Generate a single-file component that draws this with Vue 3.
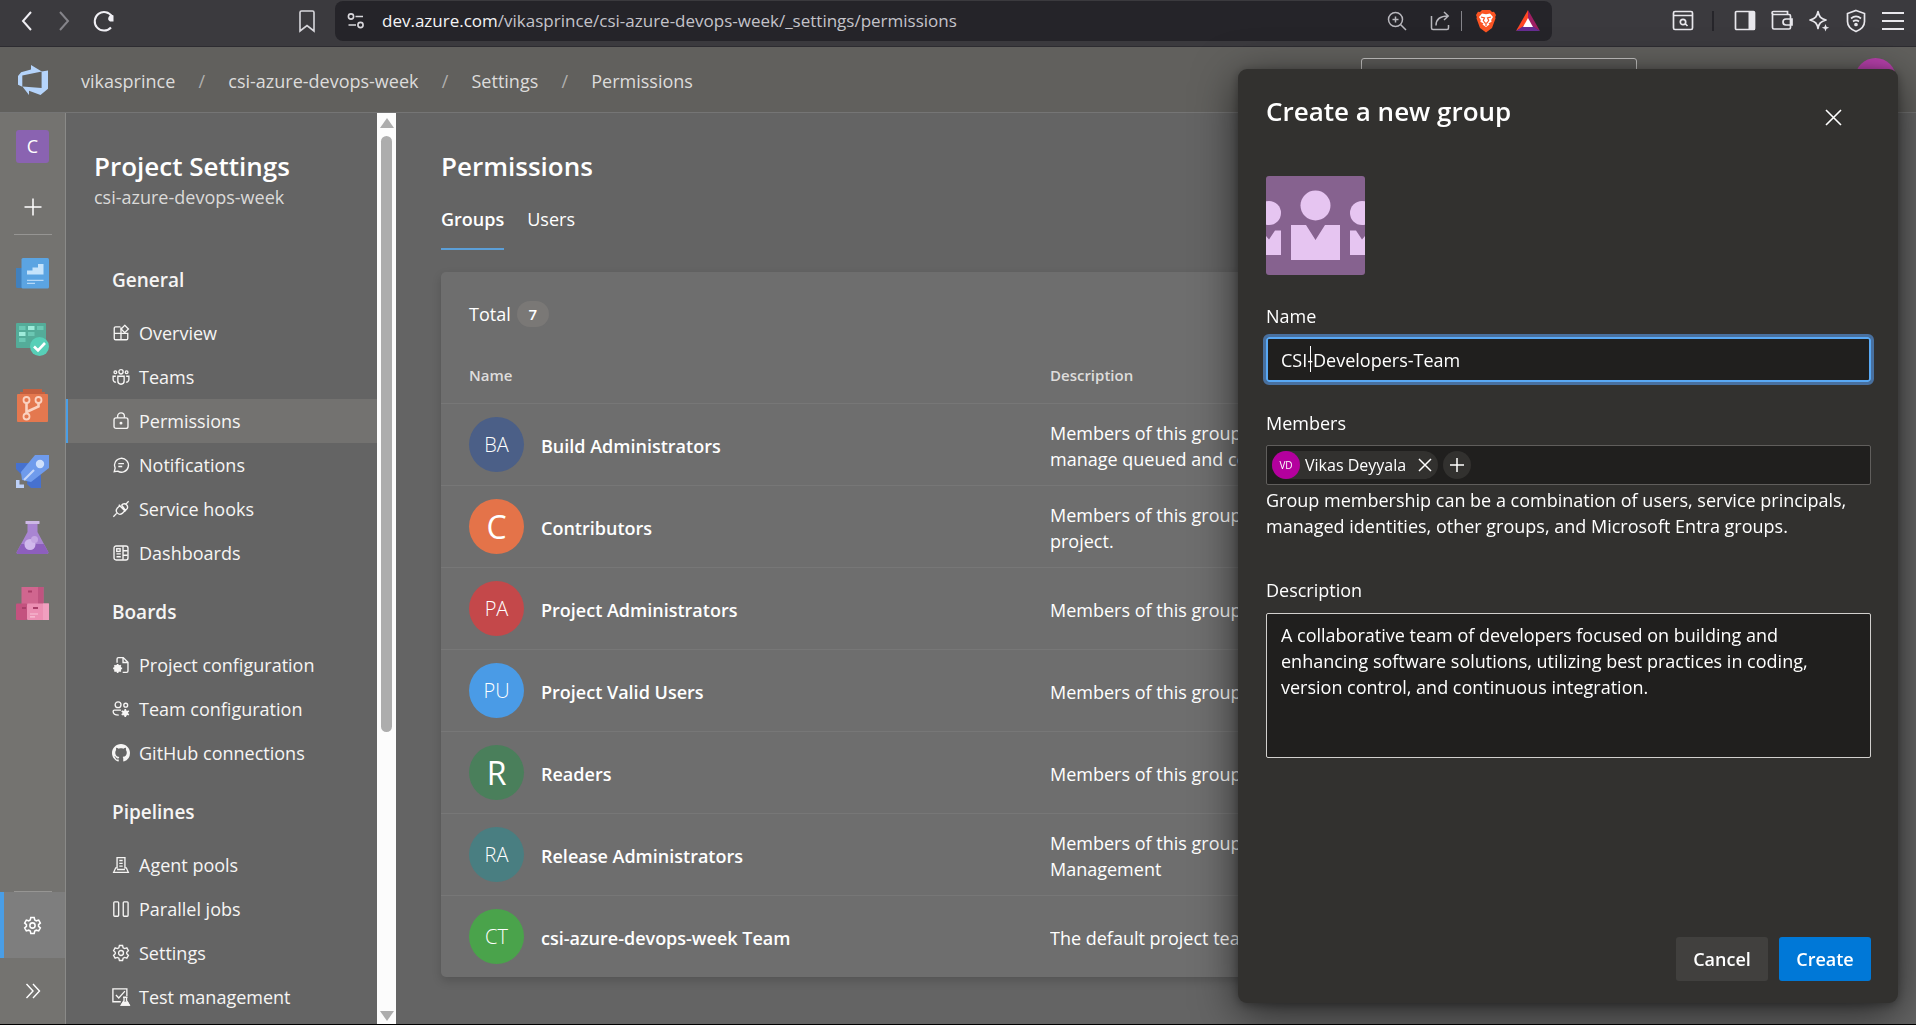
<script setup>
import { ref } from 'vue'

const crumbs = ['vikasprince', 'csi-azure-devops-week', 'Settings', 'Permissions']

const icons = {
  overview: '<path d="M7.5 2.5H3.2a1.2 1.2 0 0 0-1.2 1.2v9.1A1.2 1.2 0 0 0 3.2 14h9.6a1.2 1.2 0 0 0 1.2-1.2V8.3H2M8 3v11"/><path d="M11.3 1.2l3.3 3.2-3.3 3.3L8.1 4.4z"/>',
  teams: '<circle cx="8" cy="3.4" r="1.9"/><circle cx="3" cy="3.8" r="1.2"/><circle cx="13" cy="3.8" r="1.2"/><path d="M5.2 7.3h5.6v4.3a2.8 2.8 0 0 1-5.6 0zM3.4 7.3H1v2.9a2.4 2.4 0 0 0 2.6 2.4M12.6 7.3H15v2.9a2.4 2.4 0 0 1-2.6 2.4"/>',
  lock: '<rect x="1.8" y="5.2" width="12.4" height="9.4" rx="1.8"/><path d="M5 5V3.8a3 3 0 0 1 6 0V5"/><circle cx="8" cy="9.9" r=".7" fill="currentColor"/>',
  chat: '<path d="M2 14l.8-3.2A6.2 6.2 0 1 1 5.2 13.500z"/><path d="M5.600 6.800h5M5.600 9.300h3.500"/>',
  plug: '<path d="M1.200 14.800l2.900-2.900M11.900 4.100l2.900-2.900M7 5l-2.400 2.400a3.200 3.200 0 0 0 4.500 4.500L11.400 9.600zM6 4.200l6 6M8.600 4.600l1-1a3 3 0 0 1 4 3.900l-1.600 1.700z"/>',
  dash: '<rect x="1.800" y="1.800" width="12.400" height="12.400" rx="1.800"/><path d="M9.800 2v12M10 6h4M10 10h4M4 8.800h3.800M4 11.300h3.800"/><rect x="4.200" y="4.200" width="3" height="2.400"/>',
  project: '<path d="M4.500 6V2.600a1.200 1.200 0 0 1 1.200-1.200H10L14.200 5.600v7.700a1.200 1.200 0 0 1-1.200 1.200H9.500M9.800 1.600v4.200H14"/><circle cx="5" cy="11" r="2.200" stroke-width="2"/><path d="M5 7v8M1 11h8M2.200 8.200l5.600 5.600M7.800 8.200l-5.600 5.600" stroke-width="1.500"/>',
  teamconf: '<circle cx="5.400" cy="4.200" r="2.600"/><circle cx="12.200" cy="4.600" r="1.700"/><path d="M8 9H2.200A1.200 1.200 0 0 0 1 10.200C1 12.400 3 13.400 6 13.400"/><circle cx="11.800" cy="11.500" r="1.500" stroke-width="2"/><path d="M11.800 8v7M8.600 9.800l6.400 3.400M15 9.800l-6.400 3.400" stroke-width="1.500"/>',
  github: '<path stroke="none" fill="currentColor" d="M8 0C3.580 0 0 3.580 0 8c0 3.540 2.290 6.530 5.470 7.590.4.070.55-.17.55-.38 0-.19-.01-.82-.01-1.490-2.010.37-2.530-.49-2.690-.94-.09-.23-.48-.94-.82-1.130-.28-.15-.68-.52-.01-.53.63-.01 1.080.58 1.230.82.72 1.210 1.870.87 2.330.66.070-.52.28-.87.51-1.070-1.780-.2-3.640-.89-3.640-3.950 0-.87.31-1.590.82-2.150-.08-.2-.36-1.020.08-2.120 0 0 .67-.21 2.200.82.64-.18 1.320-.27 2-.27s1.360.09 2 .27c1.530-1.040 2.200-.82 2.200-.82.44 1.100.16 1.920.08 2.120.51.56.82 1.270.82 2.150 0 3.070-1.870 3.750-3.650 3.950.29.25.54.73.54 1.480 0 1.070-.01 1.930-.01 2.200 0 .21.15.46.55.38A8.010 8.010 0 0 0 16 8c0-4.420-3.580-8-8-8z"/>',
  agent: '<path d="M4.500 11V1.500h7V11M6.500 4h3M6.500 6.500h3M6.500 9h3M4.500 10.500H3.300L1.500 14.500h13l-1.800-4h-1.200M4.500 12h7"/>',
  parallel: '<rect x="1.600" y="1.600" width="4.300" height="12.800" rx=".8"/><rect x="10" y="1.600" width="4.300" height="12.800" rx=".8"/>',
  gear: '<path d="M6.600 1.300h2.800l.5 2 1.300.75 2-.6 1.400 2.450-1.500 1.400v1.400l1.500 1.400-1.400 2.450-2-.6-1.300.75-.5 2H6.600l-.5-2-1.300-.75-2 .6L1.400 10.100l1.500-1.400V7.300L1.400 5.900l1.400-2.450 2 .6 1.300-.75z"/><circle cx="8" cy="8" r="2.200"/>',
  test: '<path d="M13.200 7V.8H.8v11.400h7M3.500 6.200L6 8.800l5.500-6M9.800 8.200h4M10.700 8.500v2.700L8.300 15.200h7l-2.400-4V8.500"/><path fill="currentColor" d="M10 12.500h3.800l1.400 2.600H8.400z"/>',
}

const sections = [
  { title: 'General', items: [
    ['overview', 'Overview'], ['teams', 'Teams'], ['lock', 'Permissions'],
    ['chat', 'Notifications'], ['plug', 'Service hooks'], ['dash', 'Dashboards'],
  ] },
  { title: 'Boards', items: [
    ['project', 'Project configuration'], ['teamconf', 'Team configuration'], ['github', 'GitHub connections'],
  ] },
  { title: 'Pipelines', items: [
    ['agent', 'Agent pools'], ['parallel', 'Parallel jobs'], ['gear', 'Settings'], ['test', 'Test management'],
  ] },
]

const groups = [
  { initials: 'BA', color: '#4b5f87', name: 'Build Administrators', text: 'Members of this group can create, modify and delete build definitions and\nmanage queued and completed builds.' },
  { initials: 'C', color: '#e47349', name: 'Contributors', text: 'Members of this group can add, modify, and delete items within the team\nproject.' },
  { initials: 'PA', color: '#c4484a', name: 'Project Administrators', text: 'Members of this group can perform all operations in the team project.' },
  { initials: 'PU', color: '#4a9be6', name: 'Project Valid Users', text: 'Members of this group have access to the team project.' },
  { initials: 'R', color: '#4a7f5b', name: 'Readers', text: 'Members of this group have access to the team project.' },
  { initials: 'RA', color: '#497e81', name: 'Release Administrators', text: 'Members of this group can perform all operations on Release\nManagement' },
  { initials: 'CT', color: '#4aa34b', name: 'csi-azure-devops-week Team', text: 'The default project team.' },
]

const name = ref('CSI-Developers-Team')
const description = ref('A collaborative team of developers focused on building and enhancing software solutions, utilizing best practices in coding, version control, and continuous integration.')
</script>

<template>
  <div class="page">
    <div class="browser">
      <div class="nav-buttons">
        <button class="plain" aria-label="Back"><svg width="18" height="26" viewBox="0 0 18 26"><path d="M13 4L5 13l8 9" fill="none" stroke="#f0eff4" stroke-width="2"/></svg></button>
        <button class="plain" aria-label="Forward"><svg width="18" height="26" viewBox="0 0 18 26"><path d="M5 4l8 9-8 9" fill="none" stroke="#85848a" stroke-width="2"/></svg></button>
        <button class="plain" aria-label="Reload"><svg width="24" height="24" viewBox="0 0 24 24"><path d="M20 7.500A9.300 9.300 0 1 0 19 18.500" fill="none" stroke="#f0eff4" stroke-width="2"/><path d="M21.500 6.500v6h-3.500a3.300 3.300 0 0 1 3.500-6z" fill="#f0eff4"/></svg></button>
      </div>
      <button class="plain bookmark" aria-label="Bookmark"><svg width="18" height="24" viewBox="0 0 18 24"><path d="M2 3.500A1.500 1.500 0 0 1 3.500 2h11A1.500 1.500 0 0 1 16 3.500V22l-7-5.500L2 22z" fill="none" stroke="#d8d7dc" stroke-width="1.600"/></svg></button>
      <div class="address">
        <svg width="18" height="18" viewBox="0 0 18 18" fill="none" stroke="#d8d7dc" stroke-width="1.600"><circle cx="4" cy="4.500" r="2.600"/><path d="M8.500 4.500H16M1.500 13H9"/><circle cx="13.500" cy="13" r="2.600"/></svg>
        <span class="url"><b>dev.azure.com</b>/vikasprince/csi-azure-devops-week/_settings/permissions</span>
        <div class="address-icons">
          <svg width="20" height="20" viewBox="0 0 20 20" fill="none" stroke="#b8b7bd" stroke-width="1.500"><circle cx="8.500" cy="8.500" r="7"/><path d="M13.500 13.500L19 19M8.500 5.500v6M5.500 8.500h6"/></svg>
          <svg class="share" width="20" height="20" viewBox="0 0 20 20" fill="none" stroke="#b8b7bd" stroke-width="1.500"><path d="M1.500 5v12A1.500 1.500 0 0 0 3 18.500h14a1.500 1.500 0 0 0 1.500-1.500v-3M6 14.500C6 8 10 5 18 5M14 1l4.200 4L14 9"/></svg>
          <i class="bar"></i>
          <svg class="lion" width="20" height="24" viewBox="0 0 20 24"><path d="M6 1h8l2 2 2-.3L20 6l-.8 2 .3 1.500L16 19l-6 4.500L4 19 .5 9.500.8 8 0 6l2-3.300 2 .3z" fill="#fb5423"/><path d="M6 4.500l4 .8 4-.8 3 3.500-1.800 3 .4 1.800-3.100 1.700 1 1-3.500 2.500-3.500-2.500 1-1-3.100-1.700.4-1.800L3 8z" fill="#fff"/><path d="M5 8l3.500 1-1.200 2.500L9 14h2l1.700-2.500L11.500 9 15 8M10 14v3" fill="none" stroke="#fb5423" stroke-width="1.200"/></svg>
          <svg class="bat" width="24" height="22" viewBox="0 0 24 22"><path d="M12 0L0 21l12-7z" fill="#ff4724"/><path d="M12 0l12 21-12-7z" fill="#9e1f63"/><path d="M0 21h24l-12-8z" fill="#662d91"/><path d="M12 8l5 9H7z" fill="#fff"/></svg>
        </div>
      </div>
      <div class="tools">
        <svg width="22" height="22" viewBox="0 0 22 22" fill="none" stroke="#e8e7ec" stroke-width="1.700"><rect x="1.500" y="1.500" width="19" height="18" rx="1.500"/><path d="M1.500 5.500h19M13 13.500l2.500 2.500"/><circle cx="11" cy="12" r="2.700"/></svg>
        <i class="tool-bar"></i>
        <svg width="22" height="22" viewBox="0 0 22 22"><rect x="1.500" y="1.500" width="19" height="18" rx="1" fill="none" stroke="#e8e7ec" stroke-width="1.700"/><path d="M14.500 2H21v18h-6.500z" fill="#e8e7ec"/></svg>
        <svg width="22" height="22" viewBox="0 0 22 22" fill="none" stroke="#e8e7ec" stroke-width="1.700"><path d="M1.500 3v14.500A1.500 1.500 0 0 0 3 19h15a1.500 1.500 0 0 0 1.500-1.500V6A1.500 1.500 0 0 0 18 4.500H2.500A1.500 1.500 0 0 1 2.500 1.500H16.500V4.500M21 9h-6a3 3 0 0 0-3 3 3 3 0 0 0 3 3h6z"/></svg>
        <svg width="22" height="22" viewBox="0 0 22 22"><path d="M10 1.500c1 5 2.500 7 8 8.500-5.500 1.500-7 3.500-8 8.500-1-5-2.500-7-8-8.500 5.500-1.500 7-3.500 8-8.500z" fill="none" stroke="#e8e7ec" stroke-width="1.700" stroke-linejoin="round"/><path d="M17.500 14l1 2.700 2.700 1-2.700 1-1 2.700-1-2.700-2.700-1 2.700-1z" fill="#e8e7ec"/></svg>
        <svg width="22" height="24" viewBox="0 0 22 24" fill="none" stroke="#e8e7ec" stroke-width="1.700"><path d="M11 1.500l8.500 3v8c0 5-3.500 8-8.500 10-5-2-8.500-5-8.500-10v-8zM6 9.500c3-2.500 7-2.500 10 0M8 12.500c2-1.500 4-1.500 6 0"/><circle cx="11" cy="15.500" r="1" fill="#e8e7ec"/></svg>
        <svg width="22" height="22" viewBox="0 0 22 22" stroke="#e8e7ec" stroke-width="2"><path d="M0 3h22M0 11h22M0 19h22"/></svg>
      </div>
    </div>

    <header class="topbar">
      <a href="#" class="logo" aria-label="Azure DevOps"><svg width="32" height="32" viewBox="0 0 32 32"><path fill="#b5d4fb" d="M31 6.500v18.300L23.500 31 12 26.800v4.100L5.400 22.400l19.200 1.500V7.500zM24.800 7.600L14 1.100v4.300L4.100 8.300 1 12.100v8.700l4.300 1.900V11.500z"/></svg></a>
      <nav class="crumbs">
        <template v-for="(c, i) in crumbs" :key="c">
          <span v-if="i" class="slash">/</span><a href="#">{{ c }}</a>
        </template>
      </nav>
      <input class="search" type="search" aria-label="Search" />
      <span class="me"></span>
    </header>

    <div class="body">
      <nav class="rail">
        <a href="#" class="slot"><span class="tile">C</span></a>
        <a href="#" class="slot short" aria-label="New"><svg width="18" height="18" viewBox="0 0 18 18"><path d="M9 .5v17M.5 9h17" stroke="#fff" stroke-width="1.500"/></svg></a>
        <i class="rule"></i>
        <a href="#" class="slot first" aria-label="Overview"><svg width="33" height="33" viewBox="0 0 33 33"><path d="M0 11h10v20H1.500A1.500 1.500 0 0 1 0 29.500z" fill="#4180bd"/><rect x="5.500" y="1" width="27.500" height="30.500" rx="1.500" fill="#5ba4e2"/><path d="M11 17.500v-4h5.500v-3H22V7h5.500v10.500z" fill="#c5e3fb"/><path d="M11 23.300h16.500M11 26.300h8" stroke="#b5d8f7" stroke-width="1.200"/></svg></a>
        <a href="#" class="slot" aria-label="Boards"><svg width="33" height="33" viewBox="0 0 33 33"><rect width="30" height="25" rx="1" fill="#54ac99"/><path d="M3 3h6.500v4H3zM21 3h6.500v4H21zM12 9h6.500v4H12zM3 15h6.500v4H3z" fill="#6bc7b3"/><path d="M12 3h6.500v4H12zM3 9h6.500v4H3z" fill="#9eebda"/><circle cx="23.500" cy="23.500" r="9.500" fill="#57cfb7"/><path d="M18 23.500l4 4 7-7.500" fill="none" stroke="#fff" stroke-width="2.600"/></svg></a>
        <a href="#" class="slot" aria-label="Repos"><svg width="33" height="33" viewBox="0 0 33 33"><path d="M7 0h19v3h3v3H4V3h3z" fill="#c4603f"/><rect x="1" y="5" width="31" height="28" rx="1" fill="#e4784f"/><g fill="none" stroke="#fbd2c0" stroke-width="1.800"><circle cx="10.500" cy="11" r="3"/><circle cx="22.500" cy="11" r="3"/><circle cx="10.500" cy="27.500" r="3"/></g><path d="M10.500 14v10.500M22.500 14v3.500l-12 5.500" fill="none" stroke="#fbd2c0" stroke-width="2.600"/></svg></a>
        <a href="#" class="slot" aria-label="Pipelines"><svg width="33" height="33" viewBox="0 0 33 33"><path d="M0 8h13v12H6L0 14z" fill="#4671cf"/><path d="M12 20h13v13H15l-4-4z" fill="#4671cf"/><path d="M19 0h14v13L15 27l-9-2-1-8z" fill="#6f9bec"/><circle cx="24" cy="9" r="4.200" fill="#cfe0fc"/><path d="M8 25l10-10" stroke="#c4d6fa" stroke-width="2.200"/><path d="M0 25h3.500v4.500H8V33H0z" fill="#bcd0f8"/></svg></a>
        <a href="#" class="slot" aria-label="Test Plans"><svg width="33" height="33" viewBox="0 0 33 33"><path d="M11.500 2h10v9L32 30.500a1.500 1.500 0 0 1-1.300 2.500H2.300A1.500 1.500 0 0 1 1 30.500L11.500 11z" fill="#a985d2"/><path d="M5.200 23h22.600L32 30.500a1.500 1.500 0 0 1-1.300 2.500H2.300A1.500 1.500 0 0 1 1 30.500z" fill="#8d5fbd"/><rect x="9.500" width="14" height="3" rx=".5" fill="#cdb8e6"/><circle cx="14" cy="23.500" r="5.500" fill="#d0b8ec"/><circle cx="18.500" cy="18.500" r="3.500" fill="#c4a7e3"/></svg></a>
        <a href="#" class="slot" aria-label="Artifacts"><svg width="33" height="33" viewBox="0 0 33 33"><rect x="5.500" width="22" height="17" fill="#d0668f"/><path d="M22 0h5.500v17H22z" fill="#bf5480"/><rect y="16.500" width="11" height="16.500" rx="1" fill="#c4527f"/><rect x="11" y="16.500" width="22" height="16.500" rx="1" fill="#ec8fb3"/><path d="M27 16.500h6V33h-6z" fill="#f09fbf"/><path d="M12 4.500h4M6 21h4M17 21h5" stroke="#a93e69" stroke-width="2"/><path d="M14 27h8M14 29.800h5" stroke="#f7c4d7" stroke-width="1.200"/></svg></a>
        <i class="rule bottom"></i>
        <a href="#" class="slot active" aria-label="Project settings"><svg width="19" height="19" viewBox="0 0 16 16" fill="none" stroke="#fff" stroke-width="1.300" v-html="icons.gear"></svg></a>
        <a href="#" class="slot" aria-label="Expand"><svg width="16" height="16" viewBox="0 0 16 16" fill="none" stroke="#fff" stroke-width="1.400"><path d="M1.500 1L8 8l-6.500 7M8 1l6.500 7L8 15"/></svg></a>
      </nav>

      <aside class="settings">
        <h2>Project Settings</h2>
        <p class="sub">csi-azure-devops-week</p>
        <section v-for="s in sections" :key="s.title">
          <h3>{{ s.title }}</h3>
          <a v-for="[icon, label] in s.items" :key="label" href="#" :class="{ current: label === 'Permissions' }">
            <svg height="18" viewBox="0 0 16 16" fill="none" stroke="currentColor" stroke-width="1.200" v-html="icons[icon]"></svg>
            <span>{{ label }}</span>
          </a>
        </section>
      </aside>
      <div class="scrollbar">
        <i class="up"></i><i class="thumb"></i><i class="down"></i>
      </div>

      <main class="content">
        <h1>Permissions</h1>
        <div class="tabs"><button class="on">Groups</button><button>Users</button></div>
        <div class="card">
          <div class="total">Total <span>7</span></div>
          <table>
            <thead><tr><th class="c-name">Name</th><th>Description</th></tr></thead>
            <tbody>
              <tr v-for="g in groups" :key="g.name">
                <td><div class="who"><span class="avatar" :class="{ single: g.initials.length === 1 }" :style="{ background: g.color }">{{ g.initials }}</span><span class="g-name">{{ g.name }}</span></div></td>
                <td class="desc">{{ g.text }}</td>
              </tr>
            </tbody>
          </table>
        </div>
      </main>
    </div>

    <form class="panel" role="dialog" aria-label="Create a new group" @submit.prevent>
      <div class="panel-head">
        <h2>Create a new group</h2>
        <button type="button" class="plain" aria-label="Close"><svg width="17" height="17" viewBox="0 0 17 17"><path d="M1 1l15 15M16 1L1 16" stroke="#fff" stroke-width="1.600"/></svg></button>
      </div>
      <svg class="group-pic" width="99" height="99" viewBox="0 0 99 99"><rect width="99" height="99" rx="3" fill="#86628f"/><g fill="#e6c5f1"><circle cx="49.500" cy="29.500" r="15"/><path d="M25 49h15l9.500 15L59 49h15v35H25z"/><circle cx="3" cy="37" r="12"/><path d="M0 60l3 3.500 6-9h6V79H0z"/><circle cx="96" cy="37" r="12"/><path d="M99 60l-3 3.500-6-9h-6V79h15z"/></g></svg>
      <label for="g-name">Name</label>
      <div class="name-box"><input id="g-name" v-model="name" type="text" /><i class="caret"></i></div>
      <label for="g-members">Members</label>
      <div class="members">
        <span class="chip"><span class="vd">VD</span>Vikas Deyyala<button type="button" class="plain" aria-label="Remove"><svg width="14" height="14" viewBox="0 0 14 14"><path d="M1 1l12 12M13 1L1 13" stroke="#fff" stroke-width="1.500"/></svg></button></span>
        <button type="button" class="plain add" aria-label="Add member"><svg width="14" height="14" viewBox="0 0 14 14"><path d="M7 0v14M0 7h14" stroke="#fff" stroke-width="1.500"/></svg></button>
        <input id="g-members" type="text" />
      </div>
      <p class="help">Group membership can be a combination of users, service principals, managed identities, other groups, and Microsoft Entra groups.</p>
      <label for="g-desc">Description</label>
      <textarea id="g-desc" v-model="description"></textarea>
      <div class="actions"><button type="button">Cancel</button><button type="submit" class="primary">Create</button></div>
    </form>
  </div>
</template>

<style>
body { background: #646464; overflow: hidden; }
</style>

<style scoped>
* { box-sizing: border-box; }
.page {
  height: 100vh;
  display: flex;
  flex-direction: column;
  border-bottom: 1px solid #000;
  background: #646464;
  color: #fff;
  font: 18px/26px "Open Sans", "Noto Sans", sans-serif;
}
a { color: inherit; text-decoration: none; }
h1, h2, h3, p { margin: 0; }
button, input, textarea { font: inherit; color: inherit; }
svg { display: block; flex: none; }
i { display: block; }
.plain { display: flex; padding: 0; border: 0; background: none; }

.browser {
  flex: none;
  display: flex;
  height: 47px;
  padding-bottom: 4px;
  align-items: center;
  background: #3b3a3e;
  border-bottom: 1px solid #2d2c31;
}
.nav-buttons { display: flex; gap: 19px; align-items: center; width: 298px; padding-left: 18px; }
.bookmark { width: 37px; }
.address {
  flex: 1;
  display: flex;
  align-items: center;
  height: 40px;
  padding: 0 12px;
  border-radius: 8px;
  background: #252429;
}
.url { flex: 1; margin-left: 17px; font-size: 17px; color: #c4c3c9; }
.url b { font-weight: 400; color: #f4f4f6; }
.address-icons { display: flex; align-items: center; }
.share { margin-left: 23px; }
.bar { width: 1px; height: 20px; margin-left: 11px; background: #85848a; }
.lion { margin-left: 14px; }
.bat { margin-left: 20px; }
.tools { display: flex; align-items: center; gap: 15px; padding: 0 12px 0 120px; }
.tool-bar { width: 2px; height: 20px; margin: 0 5px 0 3px; background: #26252a; }

.topbar {
  flex: none;
  display: flex;
  height: 66px;
  padding-right: 20px;
  align-items: center;
  background: #61605d;
  border-bottom: 1px solid #757575;
  color: #dddcdb;
}
.logo { width: 81px; padding-left: 17px; }
.crumbs { display: flex; flex: 1; padding-top: 3px; }
.slash { width: 53px; text-align: center; color: #b0afae; }
.search { align-self: flex-start; width: 276px; height: 44px; margin: 11px 218px 0 0; border: 1px solid #c4c3c2; border-radius: 3px; background: #5c5b59; }
.me { align-self: flex-start; flex: none; width: 41px; height: 41px; margin-top: 11px; border-radius: 50%; background: #b941ad; }

.body { flex: 1; min-height: 0; display: flex; overflow: hidden; }
.rail {
  flex: none;
  display: flex;
  flex-direction: column;
  align-items: center;
  width: 66px;
  background: #747370;
  border-right: 1px solid #8a8a88;
}
.slot { flex: none; display: flex; align-items: center; justify-content: center; width: 65px; height: 66px; }
.slot.short { height: 55px; }
.slot.first { margin-top: 5px; }
.tile { width: 33px; height: 33px; border-radius: 3px; background: #8a63b1; text-align: center; line-height: 33px; }
.rule { flex: none; width: 38px; height: 1px; background: #969593; }
.rule.bottom { margin-top: auto; }
.active { background: #7e7e7e; border-left: 4px solid #4a9ee6; padding-right: 4px; }

.settings { flex: none; width: 311px; padding-top: 36px; overflow: hidden; color: #f6f5f4; }
.settings h2 { padding-left: 28px; font-size: 26px; line-height: 35px; font-weight: 600; color: #fff; }
.sub { height: 65px; padding-left: 28px; color: #dbdad9; }
.settings section { margin-bottom: 6px; }
.settings h3 { padding-left: 46px; font-size: 19px; line-height: 62px; font-weight: 600; }
.settings a { display: flex; align-items: center; height: 44px; padding-left: 43px; border-left: 2px solid transparent; }
.settings a svg { width: 20px; margin-right: 8px; }
.settings a.current { background: #737270; border-color: #4a9ee6; }

.scrollbar { flex: none; display: flex; flex-direction: column; align-items: center; width: 19px; padding: 5px 0 3px; background: #fcfcfc; }
.up, .down { border: 7px solid transparent; border-top-width: 0; border-bottom: 10px solid #adadad; }
.down { border-bottom-width: 0; border-top: 10px solid #adadad; }
.thumb { width: 11px; height: 66%; margin: 8px 0 auto; border-radius: 6px; background: #adadad; }

.content { flex: 1; min-width: 0; padding: 35px 28px 0 45px; }
h1 { font-size: 26px; line-height: 36px; font-weight: 600; }
.tabs { display: flex; gap: 23px; height: 66px; margin-bottom: 22px; }
.tabs button { height: 66px; padding: 5px 0 0; border: 0; border-bottom: 2px solid transparent; background: none; }
.tabs .on { font-weight: 600; border-color: #5b9fd8; }
.card { background: #6e6e6e; border-radius: 5px; box-shadow: 0 4px 10px rgba(0, 0, 0, 0.16); }
.total { display: flex; align-items: center; gap: 6px; height: 84px; padding-left: 28px; }
.total span { width: 32px; border-radius: 13px; background: #7a7876; text-align: center; font-size: 15px; font-weight: 600; }
table { width: 100%; border-collapse: collapse; table-layout: fixed; }
th { height: 47px; padding: 0; text-align: left; vertical-align: top; line-height: 38px; font-size: 15px; font-weight: 600; color: #dedddc; }
.c-name { width: 609px; padding-left: 28px; }
td { height: 82px; padding: 0; border-top: 1px solid #777; }
.who { display: flex; align-items: center; gap: 17px; padding-left: 28px; font-weight: 600; }
.g-name { padding-top: 3px; }
.avatar { width: 55px; height: 55px; border-radius: 50%; text-align: center; line-height: 55px; font-size: 20px; font-weight: 300; }
.avatar.single { font-size: 32px; font-weight: 400; }
.desc { padding-top: 3px; white-space: pre; overflow: hidden; }

.panel {
  position: fixed;
  top: 69px;
  right: 18px;
  bottom: 22px;
  display: flex;
  flex-direction: column;
  width: 660px;
  padding: 23px 27px 22px 28px;
  border-radius: 9px;
  background: #32312f;
  box-shadow: 0 10px 44px rgba(0, 0, 0, 0.62), 0 2px 10px rgba(0, 0, 0, 0.3);
}
.panel-head { display: flex; justify-content: space-between; height: 84px; padding-right: 29px; }
.panel-head h2 { font-size: 26px; line-height: 38px; font-weight: 600; }
.panel-head button { margin-top: 17px; height: 17px; }
.panel label { margin-top: 28px; }
.name-box { position: relative; height: 45px; margin-top: 8px; }
.name-box input {
  width: 100%;
  height: 45px;
  padding: 0 13px;
  border: 2px solid #59a9f5;
  border-radius: 3px;
  outline: 3px solid #4870a0;
  background: #201f1e;
}
.caret { position: absolute; left: 44px; top: 9px; width: 1px; height: 26px; background: #fff; }
.members { display: flex; align-items: center; height: 40px; margin-top: 9px; padding: 0 5px; border: 1px solid #605e5c; border-radius: 2px; background: #201f1e; }
.chip { display: flex; align-items: center; height: 28px; padding-right: 6px; border-radius: 14px; background: #32312f; font-size: 16px; }
.chip button { margin-left: 12px; }
.vd { width: 28px; height: 28px; margin-right: 5px; border-radius: 50%; background: #b4009e; text-align: center; line-height: 28px; font-size: 10px; }
.add { align-items: center; justify-content: center; width: 28px; height: 28px; margin-left: 5px; border-radius: 50%; background: #32312f; }
.members input { flex: 1; min-width: 0; border: 0; outline: 0; background: none; }
.help { margin-top: 2px; }
.panel .help + label { margin-top: 38px; }
textarea { flex: none; width: 100%; height: 145px; margin-top: 10px; padding: 8px 14px; border: 1px solid #d2d0ce; border-radius: 2px; outline: 0; resize: none; background: #201f1e; }
.actions { display: flex; justify-content: flex-end; gap: 11px; margin-top: auto; }
.actions button { width: 92px; height: 44px; padding: 0; border: 0; border-radius: 3px; background: #41403e; font-weight: 600; }
.actions .primary { background: #0078d7; }
</style>
